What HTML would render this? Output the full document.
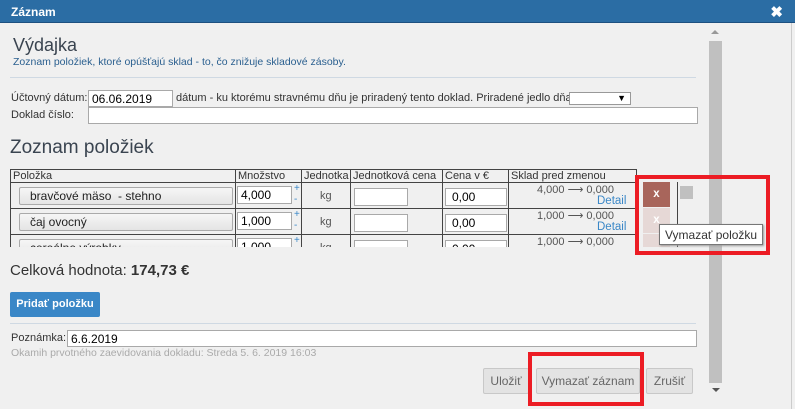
<!DOCTYPE html>
<html><head><meta charset="utf-8"><style>
*{box-sizing:border-box}
body{margin:0;width:795px;height:409px;overflow:hidden;background:#f0f0f0;font-family:"Liberation Sans",sans-serif;font-size:11.5px;color:#333;position:relative}
.a{position:absolute}
.hdr{left:0;top:0;width:795px;height:23px;background:#2b6da4;color:#fff;font-weight:bold;font-size:12px;padding:5px 11px;border-bottom:1px solid #1d5080}
.inp{position:absolute;background:#fff;border:1px solid #a9a9a9;height:17px;font-size:12px;padding:1px 3px;line-height:14px;font-family:"Liberation Sans",sans-serif;color:#000}
.tbl{left:10px;top:169px;width:627px;height:78px;overflow:hidden;border-left:1px solid #444;border-top:1px solid #444}
.tbl div.c{position:absolute;border-right:1px solid #444;border-bottom:1px solid #444}
.btn{position:absolute;background:#e3e3e3;border:1px solid #c8c8c8;border-radius:2px;color:#666;text-align:center;font-size:12px}
.ib{position:absolute;left:8px;width:214px;height:18px;background:linear-gradient(#f6f6f6,#e4e4e4);border:1px solid #aaa;border-radius:2px;padding:2px 10px;font-size:12px;line-height:13px;color:#222}
</style></head><body>
<div class="a hdr">Záznam</div>
<div class="a" style="right:12px;top:3px;color:#fff;font-weight:bold;font-size:15px">✖</div>
<div class="a" style="left:791px;top:23px;width:1px;height:386px;background:#ccc"></div>
<div class="a" style="left:13px;top:35px;font-size:18px;color:#3a4450">Výdajka</div>
<div class="a" style="left:13px;top:56px;font-size:10.5px;color:#2a5f8f">Zoznam položiek, ktoré opúšťajú sklad - to, čo znižuje skladové zásoby.</div>
<div class="a" style="left:10px;top:77px;width:686px;height:1px;background:#cfd9e3"></div>
<div class="a" style="left:11px;top:92px;font-size:11px">Účtovný dátum:</div>
<div class="inp" style="left:88px;top:90px;width:85px">06.06.2019</div>
<div class="a" style="left:176px;top:92px;font-size:11px">dátum - ku ktorému stravnému dňu je priradený tento doklad. Priradené jedlo dňa:</div>
<div class="inp" style="left:569px;top:92px;width:62px;height:13px;border-color:#999"><span style="position:absolute;right:4px;top:-2px;font-size:9px">▼</span></div>
<div class="a" style="left:11px;top:109px;font-size:11px">Doklad číslo:</div>
<div class="inp" style="left:88px;top:107px;width:610px"></div>
<div class="a" style="left:10px;top:137px;font-size:19px;color:#3a4450">Zoznam položiek</div>
<div class="a tbl">
 <div class="c" style="left:0;top:0;width:225px;height:13px;padding-left:2px;line-height:12px;font-size:11px">Položka</div>
 <div class="c" style="left:225px;top:0;width:66px;height:13px;padding-left:2px;line-height:12px;font-size:11px">Množstvo</div>
 <div class="c" style="left:291px;top:0;width:49px;height:13px;padding-left:2px;line-height:12px;font-size:11px">Jednotka</div>
 <div class="c" style="left:340px;top:0;width:92px;height:13px;padding-left:2px;line-height:12px;font-size:11px">Jednotková cena</div>
 <div class="c" style="left:432px;top:0;width:66px;height:13px;padding-left:2px;line-height:12px;font-size:11px">Cena v €</div>
 <div class="c" style="left:498px;top:0;width:128px;height:13px;padding-left:2px;line-height:12px;font-size:11px">Sklad pred zmenou</div>
 <div class="c" style="left:0;top:13px;width:225px;height:26px"></div><div class="c" style="left:225px;top:13px;width:66px;height:26px"></div><div class="c" style="left:291px;top:13px;width:49px;height:26px"></div><div class="c" style="left:340px;top:13px;width:92px;height:26px"></div><div class="c" style="left:432px;top:13px;width:66px;height:26px"></div><div class="c" style="left:498px;top:13px;width:128px;height:26px"></div>
 <div class="c" style="left:0;top:39px;width:225px;height:26px"></div><div class="c" style="left:225px;top:39px;width:66px;height:26px"></div><div class="c" style="left:291px;top:39px;width:49px;height:26px"></div><div class="c" style="left:340px;top:39px;width:92px;height:26px"></div><div class="c" style="left:432px;top:39px;width:66px;height:26px"></div><div class="c" style="left:498px;top:39px;width:128px;height:26px"></div>
 <div class="c" style="left:0;top:65px;width:225px;height:26px"></div><div class="c" style="left:225px;top:65px;width:66px;height:26px"></div><div class="c" style="left:291px;top:65px;width:49px;height:26px"></div><div class="c" style="left:340px;top:65px;width:92px;height:26px"></div><div class="c" style="left:432px;top:65px;width:66px;height:26px"></div><div class="c" style="left:498px;top:65px;width:128px;height:26px"></div>
 <div class="ib" style="top:17px">bravčové mäso &nbsp;- stehno</div>
 <div class="ib" style="top:43px">čaj ovocný</div>
 <div class="ib" style="top:69px">cereálne výrobky</div>
 <div class="inp" style="left:226px;top:16px;width:55px;height:18px">4,000</div>
 <div class="inp" style="left:226px;top:42px;width:55px;height:18px">1,000</div>
 <div class="inp" style="left:226px;top:68px;width:55px;height:18px">1,000</div>
 <div class="a" style="left:283px;top:13px;color:#3a87c7;font-size:10px;line-height:11px">+<br>-</div>
 <div class="a" style="left:283px;top:39px;color:#3a87c7;font-size:10px;line-height:11px">+<br>-</div>
 <div class="a" style="left:283px;top:65px;color:#3a87c7;font-size:10px;line-height:11px">+</div>
 <div class="a" style="left:309px;top:20px;color:#555;font-size:11px">kg</div>
 <div class="a" style="left:309px;top:46px;color:#555;font-size:11px">kg</div>
 <div class="a" style="left:309px;top:72px;color:#555;font-size:11px">kg</div>
 <div class="inp" style="left:343px;top:18px;width:54px;height:18px"></div>
 <div class="inp" style="left:343px;top:44px;width:54px;height:18px"></div>
 <div class="inp" style="left:343px;top:70px;width:54px;height:18px"></div>
 <div class="inp" style="left:434px;top:18px;width:62px;height:18px;padding-left:6px">0,00</div>
 <div class="inp" style="left:434px;top:44px;width:62px;height:18px;padding-left:6px">0,00</div>
 <div class="inp" style="left:434px;top:70px;width:62px;height:18px;padding-left:6px">0,00</div>
 <div class="a" style="left:526px;top:13px;color:#555;font-size:11px">4,000 ⟶ 0,000</div>
 <div class="a" style="left:586px;top:25px;color:#3a87c7">Detail</div>
 <div class="a" style="left:526px;top:39px;color:#555;font-size:11px">1,000 ⟶ 0,000</div>
 <div class="a" style="left:586px;top:51px;color:#3a87c7">Detail</div>
 <div class="a" style="left:526px;top:65px;color:#555;font-size:11px">1,000 ⟶ 0,000</div>
</div>
<div class="a" style="left:677px;top:182px;width:1px;height:65px;background:#444"></div>
<div class="a" style="left:643px;top:182px;width:27px;height:25px;background:#a8655b;color:#fff;text-align:center;line-height:25px;font-weight:bold">x</div>
<div class="a" style="left:643px;top:208px;width:27px;height:25px;background:#e6d8d6;color:#fff;text-align:center;line-height:25px;font-weight:bold">x</div>
<div class="a" style="left:643px;top:234px;width:27px;height:13px;background:#e6d8d6"></div>
<div class="a" style="left:680px;top:186px;width:13px;height:13px;background:#c0c0c0"></div>
<div class="a" style="left:10px;top:262px;font-size:15px;color:#333">Celková hodnota: <b>174,73 €</b></div>
<div class="a" style="left:10px;top:292px;width:90px;height:25px;background:#3a87c7;border-radius:2px;color:#fff;font-weight:bold;font-size:11px;text-align:center;line-height:25px">Pridať položku</div>
<div class="a" style="left:10px;top:323px;width:686px;height:1px;background:#cfd9e3"></div>
<div class="a" style="left:11px;top:332px;font-size:11px">Poznámka:</div>
<div class="inp" style="left:67px;top:330px;width:630px">6.6.2019</div>
<div class="a" style="left:11px;top:347px;color:#aaa;font-size:10.5px">Okamih prvotného zaevidovania dokladu: Streda 5. 6. 2019 16:03</div>
<div class="btn" style="left:483px;top:368px;width:46px;height:26px;line-height:24px">Uložiť</div>
<div class="btn" style="left:536px;top:368px;width:104px;height:26px;line-height:24px">Vymazať záznam</div>
<div class="btn" style="left:646px;top:368px;width:47px;height:26px;line-height:24px">Zrušiť</div>
<div class="a" style="left:528px;top:352px;width:116px;height:54px;border:4px solid #ec1c24"></div>
<div class="a" style="left:709px;top:41px;width:13px;height:342px;background:#c0c0c0"></div>
<div class="a" style="left:711px;top:30px;width:0;height:0;border-left:4px solid transparent;border-right:4px solid transparent;border-bottom:4px solid #999"></div>
<div class="a" style="left:712px;top:388px;width:0;height:0;border-left:4px solid transparent;border-right:4px solid transparent;border-top:4px solid #555"></div>
<div class="a" style="left:635px;top:175px;width:135px;height:80px;border:4px solid #ec1c24"></div>
<div class="a" style="left:659px;top:224px;width:104px;height:21px;background:#fff;border:1px solid #777;box-shadow:1px 1px 2px #999;font-size:12px;padding:3px 5px;color:#333;white-space:nowrap">Vymazať položku</div>
</body></html>
